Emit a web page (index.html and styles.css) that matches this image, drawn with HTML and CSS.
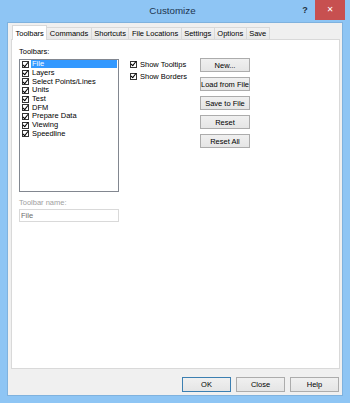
FILE: index.html
```html
<!DOCTYPE html>
<html>
  <head>
    <title>Customize</title>
    <link rel="stylesheet" href="styles.css">
  </head>
  <body>
    <div class="window">
      <div class="titlebar">
        <span></span>
        <span class="title">Customize</span>
        <div class="controls">
          <span class="help">?</span>
          <span class="close">&#x2715;</span>
        </div>
      </div>

      <div class="dialog">
        <div class="tabs">
          <span class="tab active">Toolbars</span>
          <span class="tab">Commands</span>
          <span class="tab">Shortcuts</span>
          <span class="tab">File Locations</span>
          <span class="tab">Settings</span>
          <span class="tab">Options</span>
          <span class="tab">Save</span>
        </div>

        <div class="panel">
          <div class="grid">
            <label class="caption">Toolbars:</label>
            <span></span>
            <span></span>

            <div class="listbox">
              <div class="item"><span class="check"></span><span class="name selected">File</span></div>
              <div class="item"><span class="check"></span><span class="name">Layers</span></div>
              <div class="item"><span class="check"></span><span class="name">Select Points/Lines</span></div>
              <div class="item"><span class="check"></span><span class="name">Units</span></div>
              <div class="item"><span class="check"></span><span class="name">Test</span></div>
              <div class="item"><span class="check"></span><span class="name">DFM</span></div>
              <div class="item"><span class="check"></span><span class="name">Prepare Data</span></div>
              <div class="item"><span class="check"></span><span class="name">Viewing</span></div>
              <div class="item"><span class="check"></span><span class="name">Speedline</span></div>
            </div>

            <div class="options">
              <div class="option"><span class="check"></span>Show Tooltips</div>
              <div class="option"><span class="check"></span>Show Borders</div>
            </div>

            <div class="actions">
              <button class="btn">New...</button>
              <button class="btn">Load from File</button>
              <button class="btn">Save to File</button>
              <button class="btn">Reset</button>
              <button class="btn">Reset All</button>
            </div>
          </div>

          <label class="caption disabled name-label">Toolbar name:</label>
          <input class="name-input" type="text" value="File" disabled>
        </div>

        <div class="footer">
          <button class="btn default">OK</button>
          <button class="btn">Close</button>
          <button class="btn">Help</button>
        </div>
      </div>
    </div>
  </body>
</html>
```

FILE: styles.css
```css
html, body {
  margin: 0;
  padding: 0;
}

body {
  font-family: 'Liberation Sans', Arial, sans-serif;
  font-size: 7.5px;
  color: #000;
}

.window {
  width: 350px;
  height: 403px;
  box-sizing: border-box;
  background-color: #8ec5f4;
  padding: 0 7px 7px 7px;
  display: flex;
  flex-direction: column;
}

/* title bar */
.titlebar {
  height: 22px;
  margin: 0 -7px;
  padding-right: 5px;
  display: grid;
  grid-template-columns: 1fr auto 1fr;
}

.title {
  font-size: 9.8px;
  color: #1d3550;
  line-height: 21px;
}

.controls {
  display: flex;
  justify-content: flex-end;
  align-items: flex-start;
  gap: 5px;
}

.help {
  width: 10px;
  line-height: 20px;
  text-align: center;
  font-size: 9px;
  font-weight: bold;
  color: #1f2f40;
}

.close {
  width: 30px;
  height: 20px;
  line-height: 20px;
  text-align: center;
  background-color: #c75050;
  color: #fff;
  font-size: 8px;
  font-family: 'DejaVu Sans', sans-serif;
  font-weight: bold;
}

/* dialog body */
.dialog {
  flex: 1;
  display: flex;
  flex-direction: column;
  background-color: #f0f0f0;
  border: 1px solid #7fb2de;
  padding: 2px 2px 0 3px;
}

.tabs {
  display: flex;
  align-items: flex-end;
  height: 14px;
  padding-left: 1px;
}

.tab {
  height: 11px;
  line-height: 11px;
  padding: 0 2.5px;
  border: 1px solid #d9d9d9;
  border-bottom: none;
  background: linear-gradient(#f2f2f2, #e8e8e8);
  margin-right: -1px;
}

.tab.active {
  height: 14px;
  line-height: 16px;
  background: #fff;
  margin-bottom: -1px;
  position: relative;
  z-index: 1;
}

.panel {
  flex: 1;
  background: #fff;
  border: 1px solid #d9d9d9;
  padding: 7px 0 0 7px;
}

.grid {
  display: grid;
  grid-template-columns: 100px 59px 50px;
  column-gap: 11px;
  row-gap: 3px;
  align-items: start;
}

.caption {
  display: block;
  line-height: 9px;
}

.disabled {
  color: #a0a0a0;
}

/* list box */
.listbox {
  height: 133px;
  box-sizing: border-box;
  border: 1px solid #828790;
  padding: 0 1px 0 2px;
}

.item {
  height: 8.7px;
  display: flex;
  align-items: center;
  gap: 2px;
}

.name {
  flex: 1;
  line-height: 8px;
  padding-left: 1px;
}

.name.selected {
  background-color: #3399ff;
  color: #fff;
}

.check {
  width: 7px;
  height: 7px;
  box-sizing: border-box;
  border: 1px solid #333;
  background: #fff;
  position: relative;
  flex: none;
}

.check::after {
  content: "";
  position: absolute;
  left: 1.4px;
  top: -1.2px;
  width: 2.2px;
  height: 5px;
  border: solid #000;
  border-width: 0 1.7px 1.7px 0;
  transform: rotate(38deg);
}

.options {
  margin-top: -1px;
}

.option {
  height: 12px;
  display: flex;
  align-items: center;
  gap: 3px;
}

.actions {
  margin-top: -1px;
  display: flex;
  flex-direction: column;
  gap: 5px;
}

.btn {
  height: 14px;
  padding: 0;
  margin: 0;
  border: 1px solid #acacac;
  background: linear-gradient(#f0f0f0, #e5e5e5);
  font-family: inherit;
  font-size: 7.5px;
  color: #000;
  white-space: nowrap;
}

.name-label {
  margin-top: 6px;
}

.name-input {
  display: block;
  margin-top: 2px;
  width: 100px;
  height: 13px;
  box-sizing: border-box;
  border: 1px solid #d9d9d9;
  background: #fff;
  padding: 0 0 0 1px;
  font-family: inherit;
  font-size: 7.5px;
  color: #6d6d6d;
}

/* bottom buttons */
.footer {
  height: 26px;
  box-sizing: border-box;
  display: flex;
  justify-content: flex-end;
  align-items: flex-start;
  gap: 5px;
  padding: 8px 1px 0 0;
}

.footer .btn {
  width: 49px;
  height: 15px;
}

.footer .btn.default {
  border-color: #3c7fb1;
}
```
